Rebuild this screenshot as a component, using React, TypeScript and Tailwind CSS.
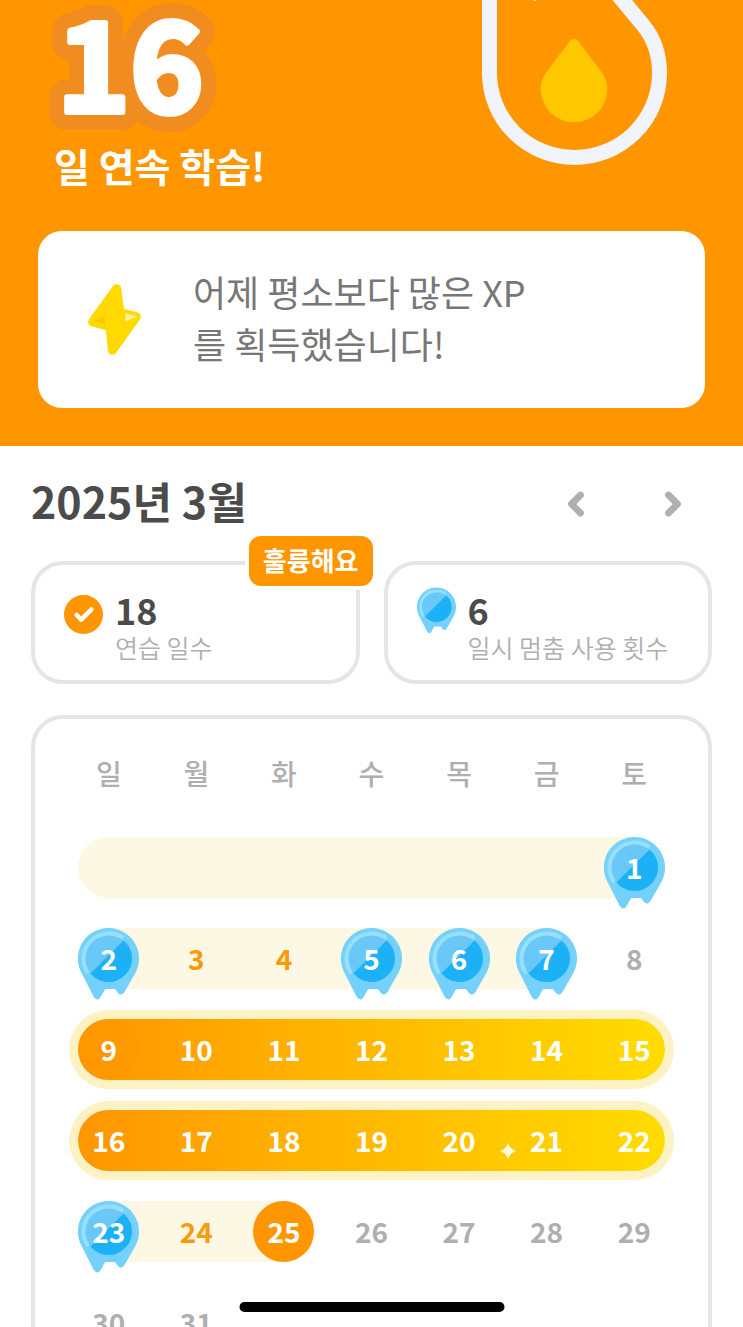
import React from 'react';
import { Check, ChevronLeft, ChevronRight } from 'lucide-react';

type DayKind = 'frozen' | 'streak' | 'perfect' | 'start' | 'today' | 'plain';

interface Day {
  date: number;
  kind: DayKind;
}

interface Week {
  days: (Day | null)[];
  bar?: string;
  sparkle?: boolean;
}

const WEEKDAYS = ['일', '월', '화', '수', '목', '금', '토'];

const PALE_BAR = 'bg-[#fdf8e3]';
const PERFECT_BAR = 'col-span-7 rounded-full bg-linear-to-r from-[#ff9600] to-[#ffdc00] ring-[9px] ring-[#fdf2c4]';

const makeDays = (from: number, kinds: DayKind[]): Day[] =>
  kinds.map((kind, i) => ({ date: from + i, kind }));

const WEEKS: Week[] = [
  {
    days: [null, null, null, null, null, null, { date: 1, kind: 'frozen' }],
    bar: `col-span-7 rounded-full ${PALE_BAR}`,
  },
  {
    days: makeDays(2, ['frozen', 'streak', 'streak', 'frozen', 'frozen', 'frozen', 'plain']),
    bar: `col-span-6 rounded-full ${PALE_BAR}`,
  },
  {
    days: makeDays(9, ['start', 'perfect', 'perfect', 'perfect', 'perfect', 'perfect', 'perfect']),
    bar: PERFECT_BAR,
  },
  {
    days: makeDays(16, ['perfect', 'perfect', 'perfect', 'perfect', 'perfect', 'perfect', 'perfect']),
    bar: PERFECT_BAR,
    sparkle: true,
  },
  {
    days: makeDays(23, ['frozen', 'streak', 'today', 'plain', 'plain', 'plain', 'plain']),
    bar: `col-span-3 rounded-full ${PALE_BAR}`,
  },
  { days: makeDays(30, ['plain', 'plain']) },
];

const DAY_STYLES: Record<DayKind, string> = {
  frozen: 'text-white',
  streak: 'text-[#f79a0c]',
  perfect: 'text-white',
  start: 'text-white bg-[#ff9600]/50',
  today: 'text-white bg-[#ff9600]',
  plain: 'text-[#afafaf]',
};

function FreezeIcon({ className }: { className?: string }) {
  return (
    <svg viewBox="0 0 61 72" className={className} aria-hidden="true">
      <path
        d="M30.500 0A30.500 30.500 0 0 1 57.600 44.500L46.500 64Q43 69 39.500 64.500L37.500 61.500Q37 61 36 61H28.500Q27 61 26.500 62L23 68.500Q19.500 74.500 15.500 68.500L2.800 43.500A30.500 30.500 0 0 1 30.500 0Z"
        fill="#74d0fd"
      />
      <circle cx="30.500" cy="30.500" r="23.500" fill="#6ac8f8" />
      <path d="M12.450 45.550L45.550 12.450A23.500 23.500 0 1 1 12.450 45.550Z" fill="#1cb0f6" />
      <path
        d="M9.300 44A25.200 25.200 0 0 1 44 9.300"
        fill="none"
        stroke="#97e0ff"
        strokeWidth="4"
        strokeLinecap="round"
      />
    </svg>
  );
}

function FlameIcon() {
  return (
    <svg viewBox="0 0 240 180" className="w-[240px] h-[180px] shrink-0" aria-hidden="true">
      <path
        d="M29.500 -10V73A85 84.500 0 0 0 199.500 73C199.500 54 193 37 183 25L154 -10"
        fill="none"
        stroke="#f1f5fb"
        strokeWidth="15"
      />
      <path d="M73 0H77L75 1Z" fill="#f1f5fb" />
      <path d="M109.500 41.500Q114 36 118.500 41.500L140 70Q147.300 79 147.300 89A33.300 33.300 0 0 1 80.700 89Q80.700 79 88 70Z" fill="#ffc800" />
    </svg>
  );
}

function BoltIcon() {
  return (
    <svg viewBox="0 0 159 213" className="w-[53px] h-[71px] shrink-0" aria-hidden="true">
      <path
        d="M86 14L96 86L145 98L73 199L66 128L14 114Z"
        fill="#ffd900"
        stroke="#ffd900"
        strokeWidth="27"
        strokeLinejoin="round"
      />
      <path d="M112 87L143 95Q147 97 143 100L112 113Z" fill="#ffef9a" />
      <path d="M18 110L50 96L51 122Z" fill="#f7c800" />
    </svg>
  );
}

function StreakCount({ count }: { count: number }) {
  return (
    <svg viewBox="0 0 190 135" className="w-[190px] h-[135px] -ml-2" role="img" aria-label={String(count)}>
      <defs>
        <text id="streak-count" x="27" y="112" fontSize="124" fontWeight="700" strokeLinejoin="round">
          {count}
        </text>
      </defs>
      <use href="#streak-count" fill="#f08c20" stroke="#f08c20" strokeWidth="36" />
      <use href="#streak-count" fill="#fff" stroke="#fff" strokeWidth="6" />
    </svg>
  );
}

function StatCard({ icon, value, label, badge }: {
  icon: React.ReactNode;
  value: number;
  label: string;
  badge?: string;
}) {
  return (
    <div className="relative flex gap-3 border-4 border-[#e5e5e5] rounded-[32px] pl-[29px] pt-6 pb-[15px]">
      <div className="-mt-0.5 flex h-[47px] w-[39px] shrink-0 items-end">{icon}</div>
      <div>
        <p className="text-[36px] leading-10 font-bold text-[#4b4b4b]">{value}</p>
        <p className="text-[25px] leading-9 font-[350] text-[#afafaf] whitespace-nowrap">{label}</p>
      </div>
      {badge && (
        <span className="absolute -top-[29px] -right-[17px] flex h-[50px] items-center rounded-xl bg-[#ff9600] px-[14px] pb-1 text-[26px] font-bold text-white ring-4 ring-white whitespace-nowrap">
          {badge}
        </span>
      )}
    </div>
  );
}

function DayCell({ day }: { day: Day }) {
  return (
    <div className={`relative flex size-[61px] items-center justify-center rounded-full pb-0.5 text-[28px] font-bold ${DAY_STYLES[day.kind]}`}>
      {day.kind === 'frozen' && <FreezeIcon className="absolute top-0 left-0 w-[61px] h-[72px]" />}
      <span className="relative">{day.date}</span>
    </div>
  );
}

function WeekRow({ week }: { week: Week }) {
  return (
    <div className="relative grid h-[61px] grid-cols-7">
      {week.bar && <div className={`col-start-1 row-start-1 mx-[13px] ${week.bar}`} />}
      <div className="relative col-span-7 col-start-1 row-start-1 grid grid-cols-7 justify-items-center">
        {week.days.map((day, i) => (day ? <DayCell key={i} day={day} /> : <span key={i} />))}
      </div>
      {week.sparkle && (
        <svg viewBox="0 0 16 16" className="absolute top-[33px] left-[71%] size-4" aria-hidden="true">
          <path d="M8 0Q10 6 16 8Q10 10 8 16Q6 10 0 8Q6 6 8 0Z" fill="#fffbe0" />
        </svg>
      )}
    </div>
  );
}

export default function App() {
  return (
    <div className="h-screen overflow-hidden bg-white font-['Noto_Sans_CJK_KR',sans-serif]">
      <header className="bg-[#ff9600] px-[38px] pb-[38px]">
        <div className="flex h-[231px] items-start justify-between pr-[5px]">
          <div>
            <StreakCount count={16} />
            <h1 className="pl-4 text-[39px] leading-[60px] font-bold text-white whitespace-nowrap">일 연속 학습!</h1>
          </div>
          <FlameIcon />
        </div>
        <div className="flex h-[177px] items-center gap-[52px] rounded-3xl bg-white pl-[50px]">
          <BoltIcon />
          <p className="pb-1.5 text-[36px] leading-[52px] text-[#777777]">
            어제 평소보다 많은 XP
            <br />
            를 획득했습니다!
          </p>
        </div>
      </header>

      <main className="px-[31px]">
        <div className="flex h-[115px] items-center justify-between pr-[21px]">
          <h2 className="pb-1.5 text-[43px] font-bold text-[#4b4b4b]">2025년 3월</h2>
          <div className="flex gap-[61px] text-[#afafaf]">
            <button type="button" aria-label="이전 달">
              <ChevronLeft size={36} strokeWidth={4.5} />
            </button>
            <button type="button" aria-label="다음 달">
              <ChevronRight size={36} strokeWidth={4.5} />
            </button>
          </div>
        </div>

        <div className="grid grid-cols-2 gap-6">
          <StatCard
            value={18}
            label="연습 일수"
            badge="훌륭해요"
            icon={
              <span className="flex size-[39px] items-center justify-center rounded-full bg-[#ff9600] text-white">
                <Check size={22} strokeWidth={5} />
              </span>
            }
          />
          <StatCard value={6} label="일시 멈춤 사용 횟수" icon={<FreezeIcon className="w-[39px] h-[47px]" />} />
        </div>

        <section className="mt-[31px] rounded-[32px] border-4 border-[#e5e5e5] px-[30px] pt-[34px] pb-10">
          <div className="mb-11 grid grid-cols-7 text-center text-[28px] leading-10 font-medium text-[#afafaf]">
            {WEEKDAYS.map((name) => (
              <span key={name}>{name}</span>
            ))}
          </div>
          <div className="flex flex-col gap-[30px]">
            {WEEKS.map((week, i) => (
              <WeekRow key={i} week={week} />
            ))}
          </div>
        </section>
      </main>

      <div className="fixed bottom-[15px] left-1/2 h-[10px] w-[265px] -translate-x-1/2 rounded-full bg-black" />
    </div>
  );
}
